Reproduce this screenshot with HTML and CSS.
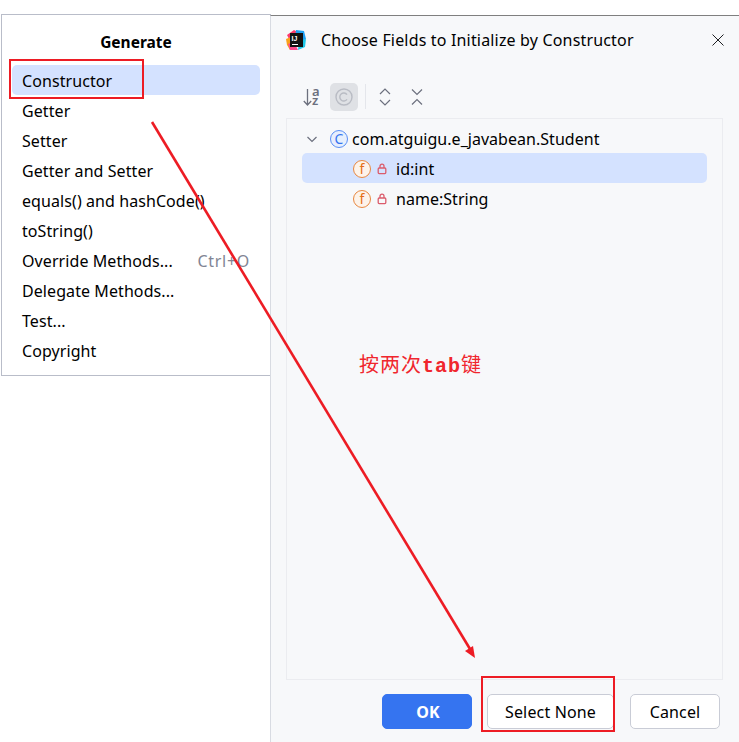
FILE: index.html
```html
<!DOCTYPE html>
<html lang="en">
<head>
    <meta charset="UTF-8">
    <title>Choose Fields to Initialize by Constructor</title>
    <link rel="stylesheet" href="styles.css">
</head>
<body>
    <div class="screen">
        <div class="popup">
            <div class="popup-title">Generate</div>
            <ul class="menu">
                <li class="menu-item selected">Constructor</li>
                <li class="menu-item">Getter</li>
                <li class="menu-item">Setter</li>
                <li class="menu-item">Getter and Setter</li>
                <li class="menu-item">equals() and hashCode()</li>
                <li class="menu-item">toString()</li>
                <li class="menu-item">Override Methods...<span class="shortcut">Ctrl+O</span></li>
                <li class="menu-item">Delegate Methods...</li>
                <li class="menu-item">Test...</li>
                <li class="menu-item">Copyright</li>
            </ul>
        </div>

        <div class="dialog">
            <div class="dialog-header">
                <svg class="app-icon" width="20" height="20" viewBox="0 0 20 20">
                    <path d="M1 5 L8 0 L13 3 L9 10 L3 9 Z" fill="#fc3a6c"/>
                    <path d="M0 9 L5 7 L6 14 L4 20 L1 15 Z" fill="#f9a11b"/>
                    <path d="M10 0 L18 1 L20 9 L15 12 L9 8 Z" fill="#1f9ff2"/>
                    <path d="M2 14 L8 12 L12 20 L4 20 Z" fill="#fc4a8c"/>
                    <path d="M13 11 L20 9 L19 17 L12 20 Z" fill="#1ec8e8"/>
                    <rect x="4" y="3" width="13" height="14" fill="#111"/>
                    <rect x="6" y="14" width="6" height="1" fill="#fff"/>
                    <text x="5.6" y="11" class="app-icon-text">IJ</text>
                </svg>
                <span class="dialog-title">Choose Fields to Initialize by Constructor</span>
                <svg class="close-icon" width="14" height="14" viewBox="0 0 14 14">
                    <path d="M1.5 1.5 L12.5 12.5 M12.5 1.5 L1.5 12.5" stroke="#1e1f22" stroke-width="1" fill="none"/>
                </svg>
            </div>

            <div class="toolbar">
                <button class="tool-btn">
                    <svg class="sort-icon" width="20" height="24" viewBox="0 0 20 24">
                        <path d="M4.5 4 V20 M0.8 16 L4.5 20 L8.2 16" stroke="#6c707e" stroke-width="1.3" fill="none"/>
                        <text class="sort-letter"><tspan x="9" y="11">a</tspan><tspan x="9" y="20">z</tspan></text>
                    </svg>
                </button>
                <button class="tool-btn active">
                    <svg width="20" height="20" viewBox="0 0 20 20">
                        <circle cx="10" cy="10" r="8" stroke="#b9bcc4" stroke-width="1.4" fill="none"/>
                        <path d="M13 7.6 A4 4 0 1 0 13 12.4" stroke="#b9bcc4" stroke-width="1.4" fill="none"/>
                    </svg>
                </button>
                <span class="tool-sep"></span>
                <button class="tool-btn">
                    <svg width="16" height="20" viewBox="0 0 16 20">
                        <path d="M3 7 L8 2 L13 7 M3 13 L8 18 L13 13" stroke="#6c707e" stroke-width="1.2" fill="none"/>
                    </svg>
                </button>
                <button class="tool-btn tool-last">
                    <svg width="16" height="20" viewBox="0 0 16 20">
                        <path d="M3 2.5 L8 7.5 L13 2.5 M3 17.5 L8 12.5 L13 17.5" stroke="#6c707e" stroke-width="1.2" fill="none"/>
                    </svg>
                </button>
            </div>

            <div class="tree">
                <div class="tree-row class-row">
                    <svg class="chevron" width="12" height="12" viewBox="0 0 12 12">
                        <path d="M1.5 4 L6 8.5 L10.5 4" stroke="#6c707e" stroke-width="1.2" fill="none"/>
                    </svg>
                    <span class="badge badge-class">C</span>
                    <span class="tree-label">com.atguigu.e_javabean.Student</span>
                </div>
                <div class="tree-row field-row selected">
                    <span class="badge badge-field">f</span>
                    <svg class="lock" width="10" height="12" viewBox="0 0 10 12">
                        <path d="M3 5 V3.2 A2 2 0 0 1 7 3.2 V5" stroke="#db5c6c" stroke-width="1.3" fill="none"/>
                        <rect x="1.2" y="5" width="7.6" height="5.6" rx="1" stroke="#db5c6c" stroke-width="1.3" fill="none"/>
                    </svg>
                    <span class="tree-label">id:int</span>
                </div>
                <div class="tree-row field-row">
                    <span class="badge badge-field">f</span>
                    <svg class="lock" width="10" height="12" viewBox="0 0 10 12">
                        <path d="M3 5 V3.2 A2 2 0 0 1 7 3.2 V5" stroke="#db5c6c" stroke-width="1.3" fill="none"/>
                        <rect x="1.2" y="5" width="7.6" height="5.6" rx="1" stroke="#db5c6c" stroke-width="1.3" fill="none"/>
                    </svg>
                    <span class="tree-label">name:String</span>
                </div>
            </div>

            <div class="dialog-footer">
                <button class="btn btn-primary">OK</button>
                <button class="btn btn-none">Select None</button>
                <button class="btn btn-cancel">Cancel</button>
            </div>
        </div>

        <!-- annotations drawn over the screenshot -->
        <div class="mark mark-constructor"></div>
        <div class="mark mark-select"></div>
        <div class="note">按两次<span class="note-key">tab</span>键</div>
        <svg class="arrow" width="739" height="742" viewBox="0 0 739 742">
            <path d="M152 122 L470 649" stroke="#ed1c24" stroke-width="2.6" fill="none"/>
            <path d="M475 658 L465 651 L473 646 Z" fill="#ed1c24"/>
        </svg>
    </div>
</body>
</html>
```

FILE: styles.css
```css
* {
    box-sizing: border-box;
}
html, body {
    margin: 0;
    padding: 0;
    background-color: #fff;
}
body {
    font-family: "Noto Sans", "Noto Sans CJK SC", sans-serif;
    color: #000;
    overflow: hidden;
}
.screen {
    position: relative;
    display: flex;
    align-items: flex-start;
    width: 739px;
    height: 742px;
    padding: 14px 0 0 1px;
    overflow: hidden;
}

/* generate popup */
.popup {
    width: 270px;
    height: 362px;
    flex-shrink: 0;
    background-color: #fff;
    border: 1px solid #b9bdc9;
    padding: 0 10px;
}
.popup-title {
    height: 50px;
    line-height: 54px;
    text-align: center;
    font-size: 15.5px;
    font-weight: 700;
}
.menu {
    list-style: none;
    margin: 0;
    padding: 0;
}
.menu-item {
    display: flex;
    justify-content: space-between;
    height: 30px;
    line-height: 32px;
    padding: 0 10px;
    font-size: 16px;
    letter-spacing: 0.08px;
    color: #000;
    white-space: nowrap;
}
.menu-item.selected {
    background-color: #d4e2ff;
    border-radius: 5px;
}
.shortcut {
    color: #818594;
    letter-spacing: 0.7px;
}

/* dialog */
.dialog {
    flex: 1;
    height: 727px;
    margin-top: 1px;
    margin-left: -1px;
    background-color: #f7f8fa;
    border-top: 1px solid #7f7f7f;
    border-left: 1px solid #d8dbe2;
    display: flex;
    flex-direction: column;
}
.dialog-header {
    display: flex;
    align-items: center;
    height: 48px;
    padding: 0 14px 0 15px;
}
.app-icon {
    flex-shrink: 0;
}
.app-icon-text {
    font-family: "Liberation Sans", sans-serif;
    font-size: 7px;
    font-weight: 700;
    fill: #fff;
}
.dialog-title {
    flex: 1;
    margin-left: 15px;
    font-size: 16px;
    letter-spacing: 0.17px;
    color: #000;
}
.toolbar {
    display: flex;
    align-items: center;
    gap: 3px;
    height: 39px;
    padding: 0 0 0 28px;
    margin-top: 13px;
}
.tool-btn {
    display: flex;
    align-items: center;
    justify-content: center;
    width: 28px;
    height: 28px;
    padding: 0;
    border: none;
    border-radius: 5px;
    background: none;
}
.tool-btn.active {
    background-color: #dfe1e5;
}
.tool-last {
    margin-left: 1px;
}
.sort-icon {
    flex-shrink: 0;
    overflow: visible;
}
.tool-sep {
    width: 1px;
    height: 25px;
    background-color: #e4e6eb;
    margin: 0 2px 0 4px;
}
.sort-letter {
    font-family: "Noto Sans", sans-serif;
    font-size: 13px;
    font-weight: 600;
    fill: #6c707e;
}
.tree {
    margin: 2px 16px 0 15px;
    height: 562px;
    background-color: #f7f8fa;
    border: 1px solid #ebecf0;
    padding: 4px 15px;
}
.tree-row {
    display: flex;
    align-items: center;
    height: 30px;
    padding-top: 2px;
    font-size: 16px;
    letter-spacing: 0.03px;
}
.class-row {
    padding-left: 4px;
}
.chevron {
    margin-right: 12px;
}
.field-row {
    padding-left: 51px;
}
.field-row.selected {
    background-color: #d4e2ff;
    border-radius: 5px;
}
.badge {
    display: inline-flex;
    align-items: center;
    justify-content: center;
    width: 18px;
    height: 18px;
    border-radius: 50%;
    font-size: 14px;
    line-height: 1;
    flex-shrink: 0;
}
.badge-class {
    border: 1.5px solid #5a8ef5;
    background-color: #e7effd;
    color: #3574f0;
    margin-right: 4px;
}
.badge-field {
    border: 1.5px solid #e8873f;
    background-color: #fdf3ea;
    color: #e66d17;
}
.lock {
    margin-left: 6px;
    margin-right: 9px;
}

/* footer buttons */
.dialog-footer {
    display: flex;
    align-items: flex-start;
    padding: 14px 0 0 111px;
    font-size: 16px;
}
.btn {
    height: 35px;
    border-radius: 5px;
    font-family: inherit;
    font-size: 16px;
    letter-spacing: 0.15px;
    color: #000;
    background-color: #fff;
    border: 1px solid #c9ccd6;
    padding: 0;
}
.btn-primary {
    width: 90px;
    padding-left: 2px;
    background-color: #3574f0;
    border-color: #3574f0;
    color: #fff;
    font-weight: 700;
}
.btn-none {
    width: 127px;
    margin-left: 15px;
}
.btn-cancel {
    width: 90px;
    margin-left: 16px;
}

/* annotations */
.mark {
    position: absolute;
    border: 2px solid #ed1c24;
}
.mark-constructor {
    left: 9px;
    top: 59px;
    width: 135px;
    height: 40px;
}
.mark-select {
    left: 481px;
    top: 676px;
    width: 134px;
    height: 56px;
}
.note {
    position: absolute;
    left: 359px;
    top: 350px;
    font-family: "Noto Sans CJK SC", sans-serif;
    font-size: 20px;
    letter-spacing: 1px;
    line-height: 28px;
    color: #f0262d;
    white-space: nowrap;
}
.note-key {
    font-family: "Liberation Mono", monospace;
    font-weight: 700;
    font-size: 20px;
}
.arrow {
    position: absolute;
    left: 0;
    top: 0;
    pointer-events: none;
}
```
